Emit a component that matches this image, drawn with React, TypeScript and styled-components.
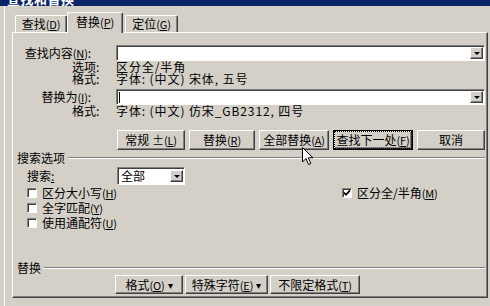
import React from 'react';
import styled, { createGlobalStyle, css } from 'styled-components';

const GlobalStyle = createGlobalStyle`
  html, body { margin: 0; padding: 0; background: #d4d0c8; }
  body {
    font-family: 'Noto Sans CJK SC', 'Liberation Sans', sans-serif;
    font-size: 12px;
    color: #000;
  }
  * { box-sizing: border-box; }
`;

const Accel: React.FC<{ k: string }> = ({ k }) => (
  <Hot>
    (<u>{k}</u>)
  </Hot>
);

const DropButton: React.FC = () => (
  <DropBtn>
    <Tri />
  </DropBtn>
);

const Check: React.FC<{ checked?: boolean; children: React.ReactNode }> = ({ checked, children }) => (
  <CheckRow>
    <CheckBox>
      {checked && (
        <svg width="8" height="8" viewBox="0 0 8 8">
          <path d="M1 3.6 L3 5.8 L7 1.4" fill="none" stroke="#000" strokeWidth="1.7" />
        </svg>
      )}
    </CheckBox>
    <span>{children}</span>
  </CheckRow>
);

const App: React.FC = () => {
  return (
    <>
      <GlobalStyle />
      <Window>
        <Client>
          <TitleBar>
            <TitleText>查找和替换</TitleText>
          </TitleBar>
          <TabRow>
            <Tab $width={52}>
              查找<Accel k="D" />
            </Tab>
            <Tab $width={56} $active>
              替换<Accel k="P" />
            </Tab>
            <Tab $width={53} $gap={2}>
              定位<Accel k="G" />
            </Tab>
          </TabRow>
          <Panel>
            <FieldRow>
              <Label>
                查找内容<Accel k="N" />:
              </Label>
              <Combo>
                <DropButton />
              </Combo>
            </FieldRow>
            <InfoRow>
              <SubLabel>选项:</SubLabel>
              <InfoValue>区分全/半角</InfoValue>
            </InfoRow>
            <InfoRow>
              <SubLabel>格式:</SubLabel>
              <InfoValue>字体: (中文) 宋体, 五号</InfoValue>
            </InfoRow>
            <FieldRow $top={4}>
              <Label>
                替换为<Accel k="I" />:
              </Label>
              <Combo>
                <Caret />
                <DropButton />
              </Combo>
            </FieldRow>
            <InfoRow>
              <SubLabel>格式:</SubLabel>
              <InfoValue>字体: (中文) 仿宋_GB2312, 四号</InfoValue>
            </InfoRow>
            <ButtonRow>
              <Button $width={68}>
                常规 ± <Accel k="L" />
              </Button>
              <Button $width={66}>
                替换<Accel k="R" />
              </Button>
              <Button $width={70}>
                全部替换<Accel k="A" />
              </Button>
              <Button $width={80} $default>
                <Focus>
                  查找下一处<Accel k="F" />
                </Focus>
              </Button>
              <Button $width={68}>取消</Button>
            </ButtonRow>
            <GroupHeader $top={2}>
              <span>搜索选项</span>
              <Etch />
            </GroupHeader>
            <SearchRow>
              <span>
                搜索<u>:</u>
              </span>
              <Select>
                <span>全部</span>
                <DropButton />
              </Select>
            </SearchRow>
            <Options>
              <Check>
                区分大小写<Accel k="H" />
              </Check>
              <Check checked>
                区分全/半角<Accel k="M" />
              </Check>
              <Check>
                全字匹配<Accel k="Y" />
              </Check>
              <span />
              <Check>
                使用通配符<Accel k="U" />
              </Check>
            </Options>
            <GroupHeader $top={32}>
              <span>替换</span>
              <Etch />
            </GroupHeader>
            <BottomRow>
              <Button $width={68} $height={19}>
                格式<Accel k="O" /> <Arrow>▾</Arrow>
              </Button>
              <Button $width={83} $height={19}>
                特殊字符<Accel k="E" /> <Arrow>▾</Arrow>
              </Button>
              <Button $width={90} $height={19}>
                不限定格式<Accel k="T" />
              </Button>
            </BottomRow>
          </Panel>
        </Client>
        <Cursor width="12" height="19" viewBox="0 0 12 19">
          <path d="M0.5 0.5 L0.5 15 L4 11.5 L6.5 17.5 L8.8 16.5 L6.3 10.8 L11 10.8 Z" fill="#fff" stroke="#000" strokeWidth="1" />
        </Cursor>
      </Window>
    </>
  );
};

export default App;

const raised = css`
  border: 1px solid;
  border-color: #fff #404040 #404040 #fff;
  box-shadow: inset -1px -1px #808080;
  background: #d4d0c8;
`;

const sunken = css`
  border: 1px solid;
  border-color: #808080 #fff #fff #808080;
  box-shadow: inset 1px 1px #404040;
  background: #fff;
`;

const Window = styled.div`
  position: relative;
  width: 490px;
  height: 306px;
  overflow: hidden;
  background: #d4d0c8;
  padding-left: 4px;
`;
const Client = styled.div`
  height: 100%;
  border-left: 1px solid #fff;
  display: flex;
  flex-direction: column;
`;
const TitleBar = styled.div`
  height: 6px;
  margin-left: -5px;
  padding-left: 7px;
  background: #0a246a;
  display: flex;
  align-items: flex-end;
  overflow: hidden;
`;
const TitleText = styled.span`
  color: #fff;
  font-weight: bold;
  font-size: 13px;
  letter-spacing: 0.5px;
  line-height: 15px;
  flex-shrink: 0;
`;
const TabRow = styled.div`
  display: flex;
  align-items: flex-end;
  height: 26px;
  padding-left: 10px;
  position: relative;
  z-index: 2;
`;
const Tab = styled.div<{ $width: number; $active?: boolean; $gap?: number }>`
  width: ${({ $width }) => $width}px;
  margin-left: ${({ $gap }) => $gap ?? 0}px;
  height: ${({ $active }) => ($active ? 21 : 17)}px;
  margin-bottom: ${({ $active }) => ($active ? -1 : 0)}px;
  padding-bottom: ${({ $active }) => ($active ? 3 : 0)}px;
  display: flex;
  align-items: center;
  justify-content: center;
  line-height: 14px;
  background: #d4d0c8;
  border-top: 1px solid #fff;
  border-left: 1px solid #fff;
  border-right: 1px solid #404040;
  box-shadow: inset -1px 0 #808080;
  border-radius: 2px 2px 0 0;
`;
const Hot = styled.span`
  font-size: 11px;
  letter-spacing: -0.2px;
`;
const Panel = styled.div`
  position: relative;
  z-index: 1;
  margin: 0 2px 0 7px;
  height: 266px;
  border: 1px solid;
  border-color: #fff #404040 #404040 #fff;
  box-shadow: inset -1px -1px #808080;
  padding: 12px 2px 0 4px;
  display: flex;
  flex-direction: column;
`;
const FieldRow = styled.div<{ $top?: number }>`
  display: grid;
  grid-template-columns: 99px 1fr;
  align-items: center;
  height: 16px;
  margin-top: ${({ $top }) => $top ?? 0}px;
`;
const Label = styled.span`
  text-align: right;
  padding-right: 25px;
  line-height: 14px;
  white-space: nowrap;
`;
const Combo = styled.div`
  ${sunken};
  height: 16px;
  display: flex;
  align-items: center;
  justify-content: flex-end;
  padding: 0 1px 0 1px;
  position: relative;
`;
const Caret = styled.span`
  width: 1px;
  height: 11px;
  background: #000;
  margin-right: auto;
  margin-left: 1px;
`;
const DropBtn = styled.div`
  ${raised};
  width: 13px;
  height: 12px;
  display: flex;
  align-items: center;
  justify-content: center;
`;
const Tri = styled.span`
  width: 0;
  height: 0;
  border-left: 3px solid transparent;
  border-right: 3px solid transparent;
  border-top: 3px solid #000;
`;
const InfoRow = styled.div`
  display: grid;
  grid-template-columns: 99px 1fr;
  align-items: center;
  height: 12px;
  line-height: 12px;
  white-space: nowrap;
`;
const SubLabel = styled.span`
  padding-left: 55px;
`;
const InfoValue = styled.span`
  letter-spacing: 0.9px;
`;
const ButtonRow = styled.div`
  display: flex;
  gap: 4px;
  margin-top: 13px;
  padding-left: 100px;
`;
const BottomRow = styled.div`
  display: flex;
  gap: 2px;
  margin-top: 1px;
  padding-left: 98px;
`;
const Button = styled.div<{ $width: number; $height?: number; $default?: boolean }>`
  ${raised};
  width: ${({ $width }) => $width}px;
  height: ${({ $height }) => $height ?? 20}px;
  display: flex;
  align-items: center;
  justify-content: center;
  line-height: 14px;
  white-space: nowrap;
  ${({ $default }) =>
    $default &&
    css`
      border-color: #000;
      box-shadow: inset 1px 1px #fff, inset -1px -1px #404040, inset -2px -2px #808080;
    `}
`;
const Focus = styled.span`
  outline: 1px dotted #000;
  outline-offset: 1px;
  padding: 0 1px;
`;
const Arrow = styled.span`
  font-size: 10px;
  margin-left: 3px;
`;
const GroupHeader = styled.div<{ $top: number }>`
  display: flex;
  align-items: center;
  gap: 3px;
  height: 12px;
  line-height: 12px;
  margin-top: ${({ $top }) => $top}px;
  white-space: nowrap;
`;
const Etch = styled.span`
  flex: 1;
  height: 2px;
  border-top: 1px solid #808080;
  border-bottom: 1px solid #fff;
`;
const SearchRow = styled.div`
  display: grid;
  grid-template-columns: 90px 68px;
  align-items: center;
  height: 18px;
  margin-top: 3px;
  padding-left: 10px;
  line-height: 14px;
`;
const Select = styled.div`
  ${sunken};
  height: 18px;
  display: flex;
  align-items: center;
  justify-content: space-between;
  padding: 0 1px 0 3px;
`;
const Options = styled.div`
  display: grid;
  grid-template-columns: 315px 1fr;
  grid-auto-rows: 15px;
  padding-left: 10px;
`;
const CheckRow = styled.div`
  display: flex;
  align-items: center;
  gap: 5px;
  line-height: 14px;
  white-space: nowrap;
`;
const CheckBox = styled.span`
  ${sunken};
  width: 10px;
  height: 10px;
  display: flex;
  align-items: center;
  justify-content: center;
`;
const Cursor = styled.svg`
  position: absolute;
  left: 302px;
  top: 147px;
  z-index: 5;
`;
